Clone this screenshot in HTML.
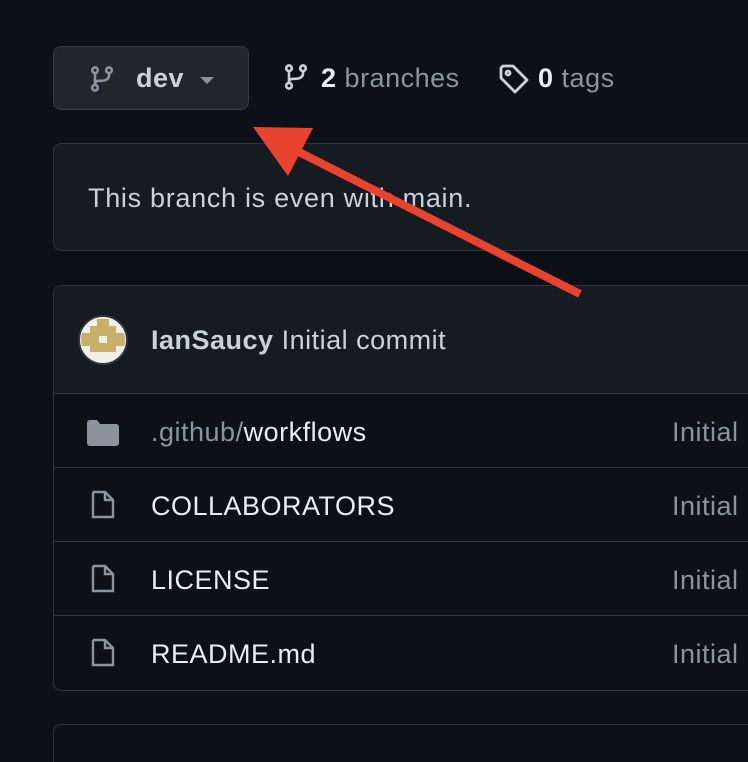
<!DOCTYPE html><html><head><style>
html,body{margin:0;width:748px;height:762px;overflow:hidden}
body{background:#0d1117;font-family:"Liberation Sans",sans-serif;color:#e6edf3;position:relative}
.a{position:absolute}
.btn{left:53px;top:46px;width:194px;height:62px;background:#21262d;border:1px solid #363b42;border-radius:8px}
.box{left:53px;width:694px;border:1px solid #30363d;border-right:0;border-radius:8px 0 0 8px}
.row{position:absolute;left:0;right:0;height:74px;border-top:1px solid #30363d;font-size:27px;letter-spacing:.5px}
.row span{position:absolute;top:23px}
.muted{color:#8b949e}
</style></head><body>
<div class="a btn">
<svg class="a" style="left:34px;top:17px" width="28" height="30" viewBox="0 0 16 16" fill="none" stroke="#8b949e" stroke-width="1.5"><circle cx="4" cy="3" r="1.6"/><circle cx="4" cy="13" r="1.6"/><circle cx="12" cy="3" r="1.6"/><path d="M4 4.6v6.8M12 4.6v1.4c0 2-2 3-4 3H6c-1 0-2 .8-2 2"/></svg>
<span class="a" style="left:82px;top:16px;font-size:27px;font-weight:bold;color:#c9d1d9;letter-spacing:.5px">dev</span>
<div class="a" style="left:146px;top:30px;border:7px solid transparent;border-top:7px solid #8b949e;border-bottom:0"></div>
</div>
<svg class="a" style="left:282px;top:62px" width="28" height="30" viewBox="0 0 16 16" fill="none" stroke="#c9d1d9" stroke-width="1.5"><circle cx="4" cy="3" r="1.6"/><circle cx="4" cy="13" r="1.6"/><circle cx="12" cy="3" r="1.6"/><path d="M4 4.6v6.8M12 4.6v1.4c0 2-2 3-4 3H6c-1 0-2 .8-2 2"/></svg>
<span class="a" style="left:321px;top:63px;font-size:27px;letter-spacing:.5px"><b>2</b> <span class="muted">branches</span></span>
<svg class="a" style="left:498px;top:63px" width="32" height="32" viewBox="0 0 16 16" fill="none" stroke="#c9d1d9" stroke-width="1.4"><path d="M1.5 2.5v5l7 7 6-6-7-7h-5z" stroke-linejoin="round"/><circle cx="5" cy="5" r="1"/></svg>
<span class="a" style="left:538px;top:63px;font-size:27px;letter-spacing:.5px"><b>0</b> <span class="muted">tags</span></span>
<div class="a box" style="top:143px;height:106px;background:#161b22"><span class="a" style="left:34px;top:39px;font-size:27px;letter-spacing:.7px;color:#c9d1d9">This branch is even with main.</span></div>
<div class="a box" style="top:285px;height:404px">
<div class="a" style="left:0;right:0;top:0;height:107px;background:#161b22;border-radius:8px 0 0 0"></div>
<svg class="a" style="left:24px;top:29px" width="50" height="50" viewBox="0 0 50 50"><defs><clipPath id="c"><circle cx="25" cy="25" r="22"/></clipPath></defs><circle cx="25" cy="25" r="24" fill="#f0eee8" stroke="#30363d" stroke-width="2"/><g fill="#c8b06a" clip-path="url(#c)"><rect x="19" y="4" width="12" height="7"/><rect x="12" y="11" width="26" height="7"/><rect x="3" y="18" width="44" height="7"/><rect x="3" y="25" width="44" height="6"/><rect x="12" y="31" width="26" height="6"/></g><rect x="21" y="21" width="8" height="7" fill="#f0eee8"/></svg>
<span class="a" style="left:97px;top:39px;font-size:27px;letter-spacing:.5px;color:#c9d1d9"><b>IanSaucy</b> Initial commit</span>
<div class="row" style="top:107px"><svg class="a" style="left:33px;top:26px" width="32" height="26" viewBox="0 0 16 13"><path d="M0 1.5C0 .7.7 0 1.5 0h3.5l1.5 2h8c.8 0 1.5.7 1.5 1.5v8c0 .8-.7 1.5-1.5 1.5h-13C.7 13 0 12.3 0 11.5z" fill="#8b949e"/></svg><span style="left:97px"><span class="muted" style="position:static">.github/</span>workflows</span><span class="muted" style="left:618px">Initial</span></div>
<div class="row" style="top:181px"><svg class="a" style="left:37px;top:22px" width="24" height="30" viewBox="0 0 12 15" fill="none" stroke="#8b949e" stroke-width="1.2"><path d="M1 1.5v12h10V5L7 1H1.5zM7 1v4h4"/></svg><span style="left:97px">COLLABORATORS</span><span class="muted" style="left:618px">Initial</span></div>
<div class="row" style="top:255px"><svg class="a" style="left:37px;top:22px" width="24" height="30" viewBox="0 0 12 15" fill="none" stroke="#8b949e" stroke-width="1.2"><path d="M1 1.5v12h10V5L7 1H1.5zM7 1v4h4"/></svg><span style="left:97px">LICENSE</span><span class="muted" style="left:618px">Initial</span></div>
<div class="row" style="top:329px"><svg class="a" style="left:37px;top:22px" width="24" height="30" viewBox="0 0 12 15" fill="none" stroke="#8b949e" stroke-width="1.2"><path d="M1 1.5v12h10V5L7 1H1.5zM7 1v4h4"/></svg><span style="left:97px">README.md</span><span class="muted" style="left:618px">Initial</span></div>
</div>
<div class="a box" style="top:724px;height:37px;border-bottom:0;border-radius:8px 0 0 0"></div>
<svg class="a" style="left:0;top:0" width="748" height="762"><line x1="580" y1="294" x2="295" y2="150" stroke="#e8432f" stroke-width="8"/><polygon points="253,127 313,128 288,176" fill="#e8432f"/></svg>
</body></html>
